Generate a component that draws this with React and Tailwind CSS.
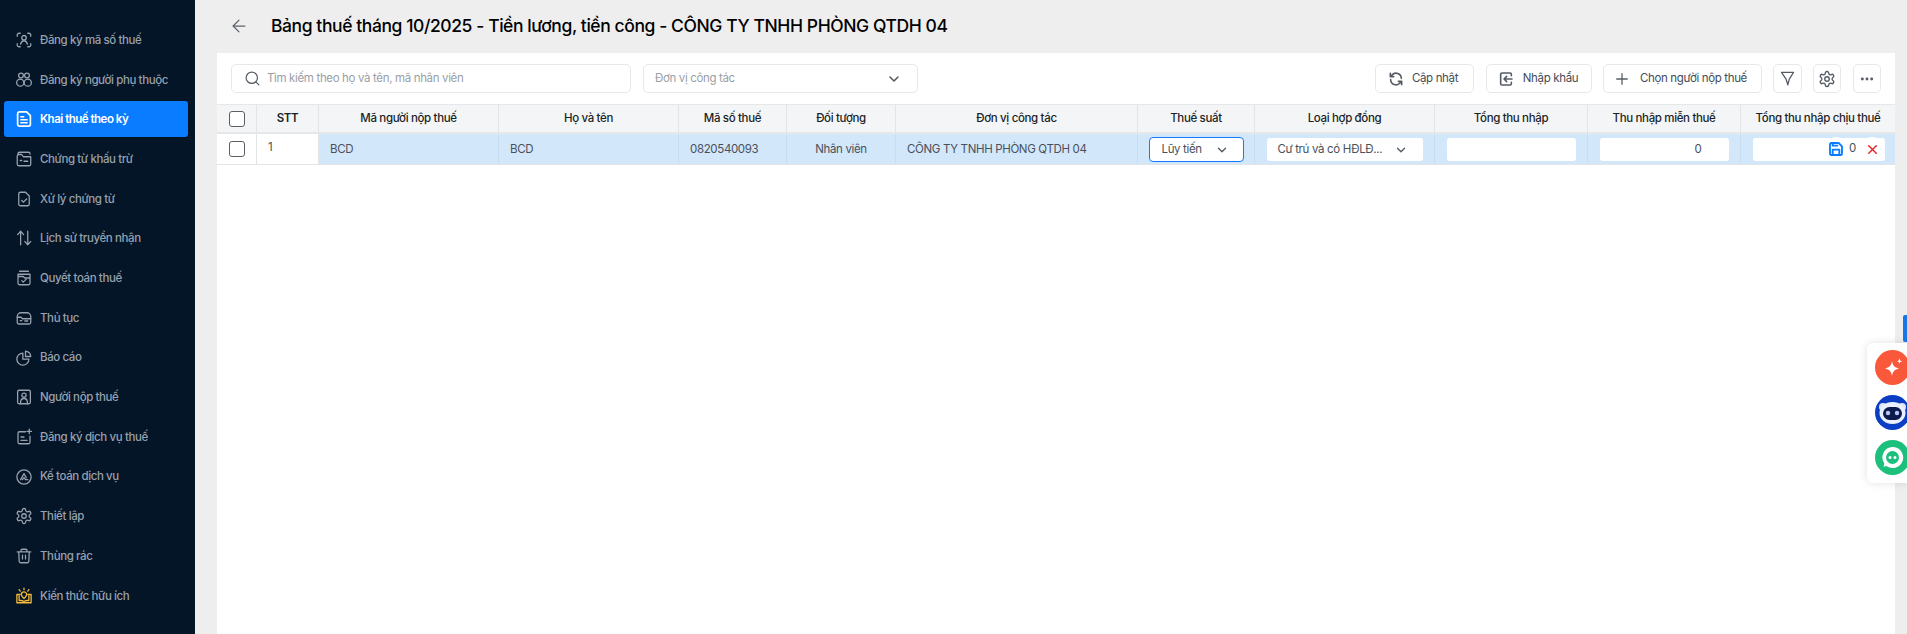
import React from "react";
import { ArrowLeft, Search, ChevronDown, Plus, Ellipsis, X } from "lucide-react";

const Ico = ({ children, className = "" }) => (
  <svg viewBox="0 0 24 24" fill="none" stroke="currentColor" strokeWidth="1.700" strokeLinecap="round" strokeLinejoin="round" className={"w-[18px] h-[18px] shrink-0 " + className}>
    {children}
  </svg>
);

const gear = "M12.220 2h-.44a2 2 0 0 0-2 2v.18a2 2 0 0 1-1 1.730l-.43.250a2 2 0 0 1-2 0l-.15-.080a2 2 0 0 0-2.730.730l-.220.380a2 2 0 0 0 .730 2.730l.150.100a2 2 0 0 1 1 1.720v.510a2 2 0 0 1-1 1.740l-.150.090a2 2 0 0 0-.730 2.730l.220.380a2 2 0 0 0 2.730.730l.150-.080a2 2 0 0 1 2 0l.430.250a2 2 0 0 1 1 1.730V20a2 2 0 0 0 2 2h.440a2 2 0 0 0 2-2v-.18a2 2 0 0 1 1-1.730l.430-.250a2 2 0 0 1 2 0l.150.080a2 2 0 0 0 2.730-.730l.220-.390a2 2 0 0 0-.730-2.730l-.150-.080a2 2 0 0 1-1-1.740v-.500a2 2 0 0 1 1-1.740l.150-.090a2 2 0 0 0 .730-2.730l-.220-.380a2 2 0 0 0-2.730-.730l-.150.080a2 2 0 0 1-2 0l-.430-.250a2 2 0 0 1-1-1.730V4a2 2 0 0 0-2-2z";

const menu = [
  ["Đăng ký mã số thuế", <><path d="M7 3H5.500A2.500 2.500 0 0 0 3 5.500V7M17 3h1.500A2.500 2.500 0 0 1 21 5.500V7M3 17v1.500A2.500 2.500 0 0 0 5.500 21H7M21 17v1.500a2.500 2.500 0 0 1-2.500 2.500H17" /><circle cx="12" cy="9" r="3" /><path d="M7.500 17.500c.6-2.700 2.400-4.500 4.500-4.500s3.900 1.800 4.500 4.500" /></>],
  ["Đăng ký người phụ thuộc", <><circle cx="8" cy="6" r="3.200" /><circle cx="16" cy="6" r="3.200" /><circle cx="7" cy="15.500" r="4.800" /><circle cx="17" cy="15.500" r="4.800" /></>],
  ["Khai thuế theo kỳ", <><path d="M6 2.500h9.500L20.500 7.500V19a2.500 2.500 0 0 1-2.500 2.500H6A2.500 2.500 0 0 1 3.500 19V5A2.500 2.500 0 0 1 6 2.500z" strokeWidth="2.300" /><path d="M8 9h3.500M8 13h8M8 17h8" strokeWidth="2.300" /></>],
  ["Chứng từ khấu trừ", <><path d="M4 5.500V5a2 2 0 0 1 2-2h12a2 2 0 0 1 2 2v.500M3 9V8a2 2 0 0 1 2-2h4l2 3h10v10a2 2 0 0 1-2 2H5a2 2 0 0 1-2-2z" /><path d="M7 14h2M12 15h5" /></>],
  ["Xử lý chứng từ", <><path d="M7 3h7l5 5v11a2 2 0 0 1-2 2H7a2 2 0 0 1-2-2V5a2 2 0 0 1 2-2z" /><path d="M9 14l2.200 2.200L15.500 12" /></>],
  ["Lịch sử truyền nhận", <><path d="M7.500 21V3M3.500 7.500l4-4.500 4 4.500M17 3v18M13 16.500l4 4.500 4-4.500" /></>],
  ["Quyết toán thuế", <><path d="M6 3h12M4 7h16v12a2 2 0 0 1-2 2H6a2 2 0 0 1-2-2zM4 10h7l2 2h7" /><path d="M9 15.500l2 2 4-4" /></>],
  ["Thủ tục", <><path d="M3 10a5 5 0 0 1 5-5h8a5 5 0 0 1 5 5v8a2 2 0 0 1-2 2H5a2 2 0 0 1-2-2z" /><path d="M3 11h5l2 2h11M7 15.500h2M13 16h4" /></>],
  ["Báo cáo", <><path d="M10.500 5.500A8 8 0 1 0 18.500 13.500H10.500z" /><path d="M14 3a7 7 0 0 1 7 7h-7z" /></>],
  ["Người nộp thuế", <><rect x="3.500" y="3" width="17" height="18" rx="2" /><circle cx="12" cy="9.500" r="2.800" /><path d="M7.500 21v-2c0-3 2-5 4.500-5s4.500 2 4.500 5v2" /></>],
  ["Đăng ký dịch vụ thuế", <><path d="M14 5H6a2 2 0 0 0-2 2v12a2 2 0 0 0 2 2h12a2 2 0 0 0 2-2v-8" /><path d="M19 1.500v6M16 4.500h6M8 12h4M8 16.500h8" /></>],
  ["Kế toán dịch vụ", <><circle cx="12" cy="12" r="9.500" /><path d="M7.500 15.500L12 7.500l3 5.500M9.800 15.500l2.200-2.500 2 2.500h3" /></>],
  ["Thiết lập", <><path d={gear} /><circle cx="12" cy="12" r="3" /></>],
  ["Thùng rác", <><path d="M3 6.500h18M8 6.500V4.500a1.500 1.500 0 0 1 1.500-1.500h5A1.500 1.500 0 0 1 16 4.500v2M5 6.500l.6 12.500a2 2 0 0 0 2 2h8.800a2 2 0 0 0 2-2L19 6.500M10 11v5M14 11v5" /></>],
  ["Kiến thức hữu ích", <><path d="M7 10H2.500v11h19V10H17M12 19.500c-1-1-3-1.500-5-1.500H5.500V12M12 19.500c1-1 3-1.500 5-1.500h1.500V12" /><path d="M12 15.500c-2-2-3.500-3.500-3.500-5.500a3.500 3.500 0 0 1 7 0c0 2-1.500 3.500-3.500 5.500z" /><path d="M12 1.500v2M5.500 3.500l1.500 2M18.500 3.500l-1.500 2" /></>],
];

const Btn = ({ children, className = "" }) => (
  <div className={"h-[29px] flex items-center justify-center border border-[#e8e8e8] rounded-[5px] text-[11.500px] tracking-[-0.350px] text-[#444c58] bg-white " + className}>{children}</div>
);

const heads = ["", "STT", "Mã người nộp thuế", "Họ và tên", "Mã số thuế", "Đối tượng", "Đơn vị công tác", "Thuế suất", "Loại hợp đồng", "Tổng thu nhập", "Thu nhập miễn thuế", "Tổng thu nhập chịu thuế"];

const Check = () => <span className="block w-4 h-4 border-[1.500px] border-[#5c5f66] rounded-[3px] bg-white" />;

const gridCols = "grid grid-cols-[40px_62px_180px_180px_108px_109px_242px_117px_180px_153px_153px_154px]";

const cell = "bg-[#d3e7fb] pt-px flex items-center border-r border-[#c9dcf0] ";

const Field = ({ className = "", children }) => (
  <div className={"h-[23px] bg-white rounded-[3px] flex items-center " + className}>{children}</div>
);

export default function App() {
  return (
    <div className="flex h-screen overflow-hidden bg-[#eeeeee] text-black" style={{ fontFamily: "Inter, 'Noto Sans', sans-serif" }}>
      <aside className="w-[195px] shrink-0 bg-[#041527] pt-[22px] pl-1 pr-[7px] flex flex-col gap-[3.700px]">
        {menu.map(([label, icon], i) => (
          <div key={label} className={"h-9 pl-[11px] flex items-center gap-[7px] rounded-[3px] text-[11.500px] whitespace-nowrap " + (i === 2 ? "bg-[#0a7cff] text-white font-semibold tracking-[-0.500px]" : "text-[#98a1ae] font-medium tracking-[-0.400px]")}>
            <Ico className={i === 14 ? "text-[#f6b93b]" : ""}>{icon}</Ico>
            <span className="pt-px">{label}</span>
          </div>
        ))}
      </aside>
      <main className="flex-1 min-w-0 pl-[22px] pr-3 flex flex-col">
        <header className="h-[53px] shrink-0 flex items-center pb-[1px]">
          <ArrowLeft className="w-[20px] h-[20px] ml-[12px] text-[#5f646c]" strokeWidth={1.500} />
          <h1 className="ml-[22px] text-[17.500px] font-medium tracking-[-0.420px] whitespace-nowrap">Bảng thuế tháng 10/2025 - Tiền lương, tiền công - CÔNG TY TNHH PHÒNG QTDH 04</h1>
        </header>
        <section className="flex-1 bg-white min-h-0">
          <div className="h-[51px] pt-[11px] pl-[14px] flex">
            <div className="w-[400px] h-[29px] border border-[#e8e8e8] rounded-[5px] flex items-center pl-[12px] text-[11.500px] tracking-[-0.350px] text-[#9aa0a8]">
              <Search className="w-[17px] h-[17px] text-[#555b64]" strokeWidth={1.700} />
              <span className="ml-[6px]">Tìm kiếm theo họ và tên, mã nhân viên</span>
            </div>
            <div className="ml-3 w-[275px] h-[29px] border border-[#e8e8e8] rounded-[5px] flex items-center justify-between pl-[11px] pr-[15px] text-[11.500px] tracking-[-0.350px] text-[#9aa0a8]">
              <span>Đơn vị công tác</span>
              <ChevronDown className="w-[16px] h-[16px] text-[#555b64]" strokeWidth={2.400} />
            </div>
            <div className="ml-auto pr-[14px] flex">
              <Btn className="w-[99px] gap-[8px] pr-[3px]">
                <svg viewBox="0 0 24 24" fill="none" stroke="#555b64" strokeWidth="2.400" strokeLinecap="round" strokeLinejoin="round" className="w-[16px] h-[16px]"><path d="M20 11a8 8 0 0 0-14-5L3.500 8.500M3.500 3.500v5h5M4 13a8 8 0 0 0 14 5l2.500-2.500M20.500 20.500v-5h-5" /></svg>
                <span>Cập nhật</span>
              </Btn>
              <Btn className="ml-3 w-[106px] gap-[9px] pr-[2px]">
                <svg viewBox="0 0 24 24" fill="none" stroke="#555b64" strokeWidth="2.400" strokeLinecap="round" strokeLinejoin="round" className="w-[16px] h-[16px]"><path d="M20 7V5a2 2 0 0 0-2-2H6a2 2 0 0 0-2 2v14a2 2 0 0 0 2 2h12a2 2 0 0 0 2-2v-2" /><path d="M21 12H9M13 8l-4 4 4 4" /></svg>
                <span>Nhập khẩu</span>
              </Btn>
              <Btn className="ml-[11px] w-[159px] gap-[9px] pr-[5px]"><Plus className="w-[18px] h-[18px] text-[#555b64]" strokeWidth={1.700} /><span>Chọn người nộp thuế</span></Btn>
              <Btn className="ml-[11px] w-[29px]">
                <svg viewBox="0 0 24 24" fill="none" stroke="#555b64" strokeWidth="1.800" strokeLinecap="round" strokeLinejoin="round" className="w-[17px] h-[17px]"><path d="M3.500 3.500h17l-6 9.500-2 8-2.500-8z" /></svg>
              </Btn>
              <Btn className="ml-[11px] w-[28px]">
                <svg viewBox="0 0 24 24" fill="none" stroke="#555b64" strokeWidth="1.800" strokeLinecap="round" strokeLinejoin="round" className="w-[18px] h-[18px]"><path d={gear} /><circle cx="12" cy="12" r="3" /></svg>
              </Btn>
              <Btn className="ml-3 w-[28px]"><Ellipsis className="w-[16px] h-[16px] text-[#555b64]" strokeWidth={2.400} /></Btn>
            </div>
          </div>
          <div className={gridCols + " h-[30px] bg-[#f4f5f6] border-t border-b-2 border-[#e6e7e9] text-[11.500px] tracking-[-0.350px] font-medium text-[#1b1f27]"}>
            {heads.map((h, i) => (
              <div key={i} className={"flex items-center justify-center whitespace-nowrap border-r border-[#e3e4e6] last:border-r-0 " + (i === 1 ? "font-semibold" : "")}>
                {i === 0 ? <Check /> : h}
              </div>
            ))}
          </div>
          <div className={gridCols + " h-[31px] border-b border-[#e2e4e8] text-[11.500px] tracking-[-0.350px] text-[#4a505a] whitespace-nowrap"}>
            <div className="flex items-center justify-center border-r border-[#e3e4e6]"><Check /></div>
            <div className="pl-[11px] pb-[2px] flex items-center border-r border-[#e3e4e6]">1</div>
            <div className={cell + "pl-[11px]"}>BCD</div>
            <div className={cell + "pl-[11px]"}>BCD</div>
            <div className={cell + "pl-[11px]"}>0820540093</div>
            <div className={cell + "justify-center"}>Nhân viên</div>
            <div className={cell + "pl-[11px]"}>CÔNG TY TNHH PHÒNG QTDH 04</div>
            <div className={cell + "justify-center"}>
              <div className="w-[95px] h-[25px] bg-white border border-[#1677ff] rounded-[4px] flex items-center justify-between pl-[12px] pr-[14px]">
                <span>Lũy tiến</span><ChevronDown className="w-[14px] h-[14px] text-[#555b64]" strokeWidth={2.400} />
              </div>
            </div>
            <div className={cell + "justify-center"}>
              <Field className="w-[156px] justify-between pl-[11px] pr-[15px]"><span>Cư trú và có HĐLĐ...</span><ChevronDown className="w-[14px] h-[14px] text-[#555b64]" strokeWidth={2.400} /></Field>
            </div>
            <div className={cell + "justify-center"}><Field className="w-[129px]" /></div>
            <div className={cell + "justify-center"}><Field className="w-[129px] justify-end pr-[27px]">0</Field></div>
            <div className="bg-[#d3e7fb] pt-px relative flex items-center pl-3">
              <Field className="w-[132px]" />
              <span className="absolute left-[83px] top-[3px] w-6 h-6 rounded-full bg-white flex items-center justify-center">
                <svg viewBox="0 0 24 24" fill="none" stroke="#0a7cff" strokeWidth="2.800" strokeLinecap="round" strokeLinejoin="round" className="w-[16px] h-[16px]"><path d="M5 3h11l5 5v11a2 2 0 0 1-2 2H5a2 2 0 0 1-2-2V5a2 2 0 0 1 2-2z" /><path d="M7 21v-8h10v8M7 3v4h7" /></svg>
              </span>
              <span className="absolute left-[108px] top-[5px] leading-[18px]">0</span>
              <span className="absolute left-[119px] top-[3px] w-6 h-6 rounded-full bg-white flex items-center justify-center"><X className="w-[15px] h-[15px] text-[#e5262b]" strokeWidth={2.400} /></span>
            </div>
          </div>
        </section>
      </main>
      <div className="absolute right-0 top-[315px] w-1 h-[27px] bg-[#1677e8] rounded-l-[2px]" />
      <div className="absolute right-0 top-[343px] w-10 h-[140px] bg-white rounded-l-[6px] shadow-[0_0_8px_rgba(0,0,0,0.12)] overflow-hidden">
        <div className="absolute left-[8px] top-[7px] w-[35px] h-[35px] rounded-full bg-[#f9593a] flex items-center justify-center">
          <svg viewBox="0 0 24 24" className="w-6 h-6" fill="white"><path d="M11 5c1 5 2.500 6.500 7 7.500-4.500 1-6 2.500-7 7.500-1-5-2.500-6.500-7-7.500 4.500-1 6-2.500 7-7.500z" /><path d="M18.500 2.500l.7 2 2 .7-2 .7-.7 2-.7-2-2-.7 2-.7z" /></svg>
        </div>
        <div className="absolute left-[8px] top-[52px] w-[35px] h-[35px] rounded-full bg-[#0b3ec4] flex items-center justify-center">
          <svg viewBox="0 0 35 35" className="w-[35px] h-[35px]"><circle cx="8" cy="12" r="4" fill="#dfe6fb" /><circle cx="27" cy="12" r="4" fill="#dfe6fb" /><ellipse cx="17.500" cy="18" rx="13" ry="11" fill="#eaf0ff" /><rect x="8" y="12" width="19" height="13" rx="6.500" fill="#0c1a4d" /><circle cx="13" cy="18" r="2.200" fill="#b9c6f5" /><circle cx="22" cy="18" r="2.200" fill="#b9c6f5" /></svg>
        </div>
        <div className="absolute left-[8px] top-[97px] w-[35px] h-[35px] rounded-full bg-[#1cbf7c] flex items-center justify-center">
          <svg viewBox="0 0 35 35" className="w-[35px] h-[35px]"><path d="M17.500 7a10.500 10.500 0 1 1-6 19l-3 .8.800-3.300A10.500 10.500 0 0 1 17.500 7z" fill="white" /><circle cx="17.500" cy="17.500" r="6.500" fill="#1cbf7c" /><circle cx="15" cy="17.500" r="1.500" fill="white" /><circle cx="20" cy="17.500" r="1.500" fill="white" /></svg>
        </div>
      </div>
    </div>
  );
}
